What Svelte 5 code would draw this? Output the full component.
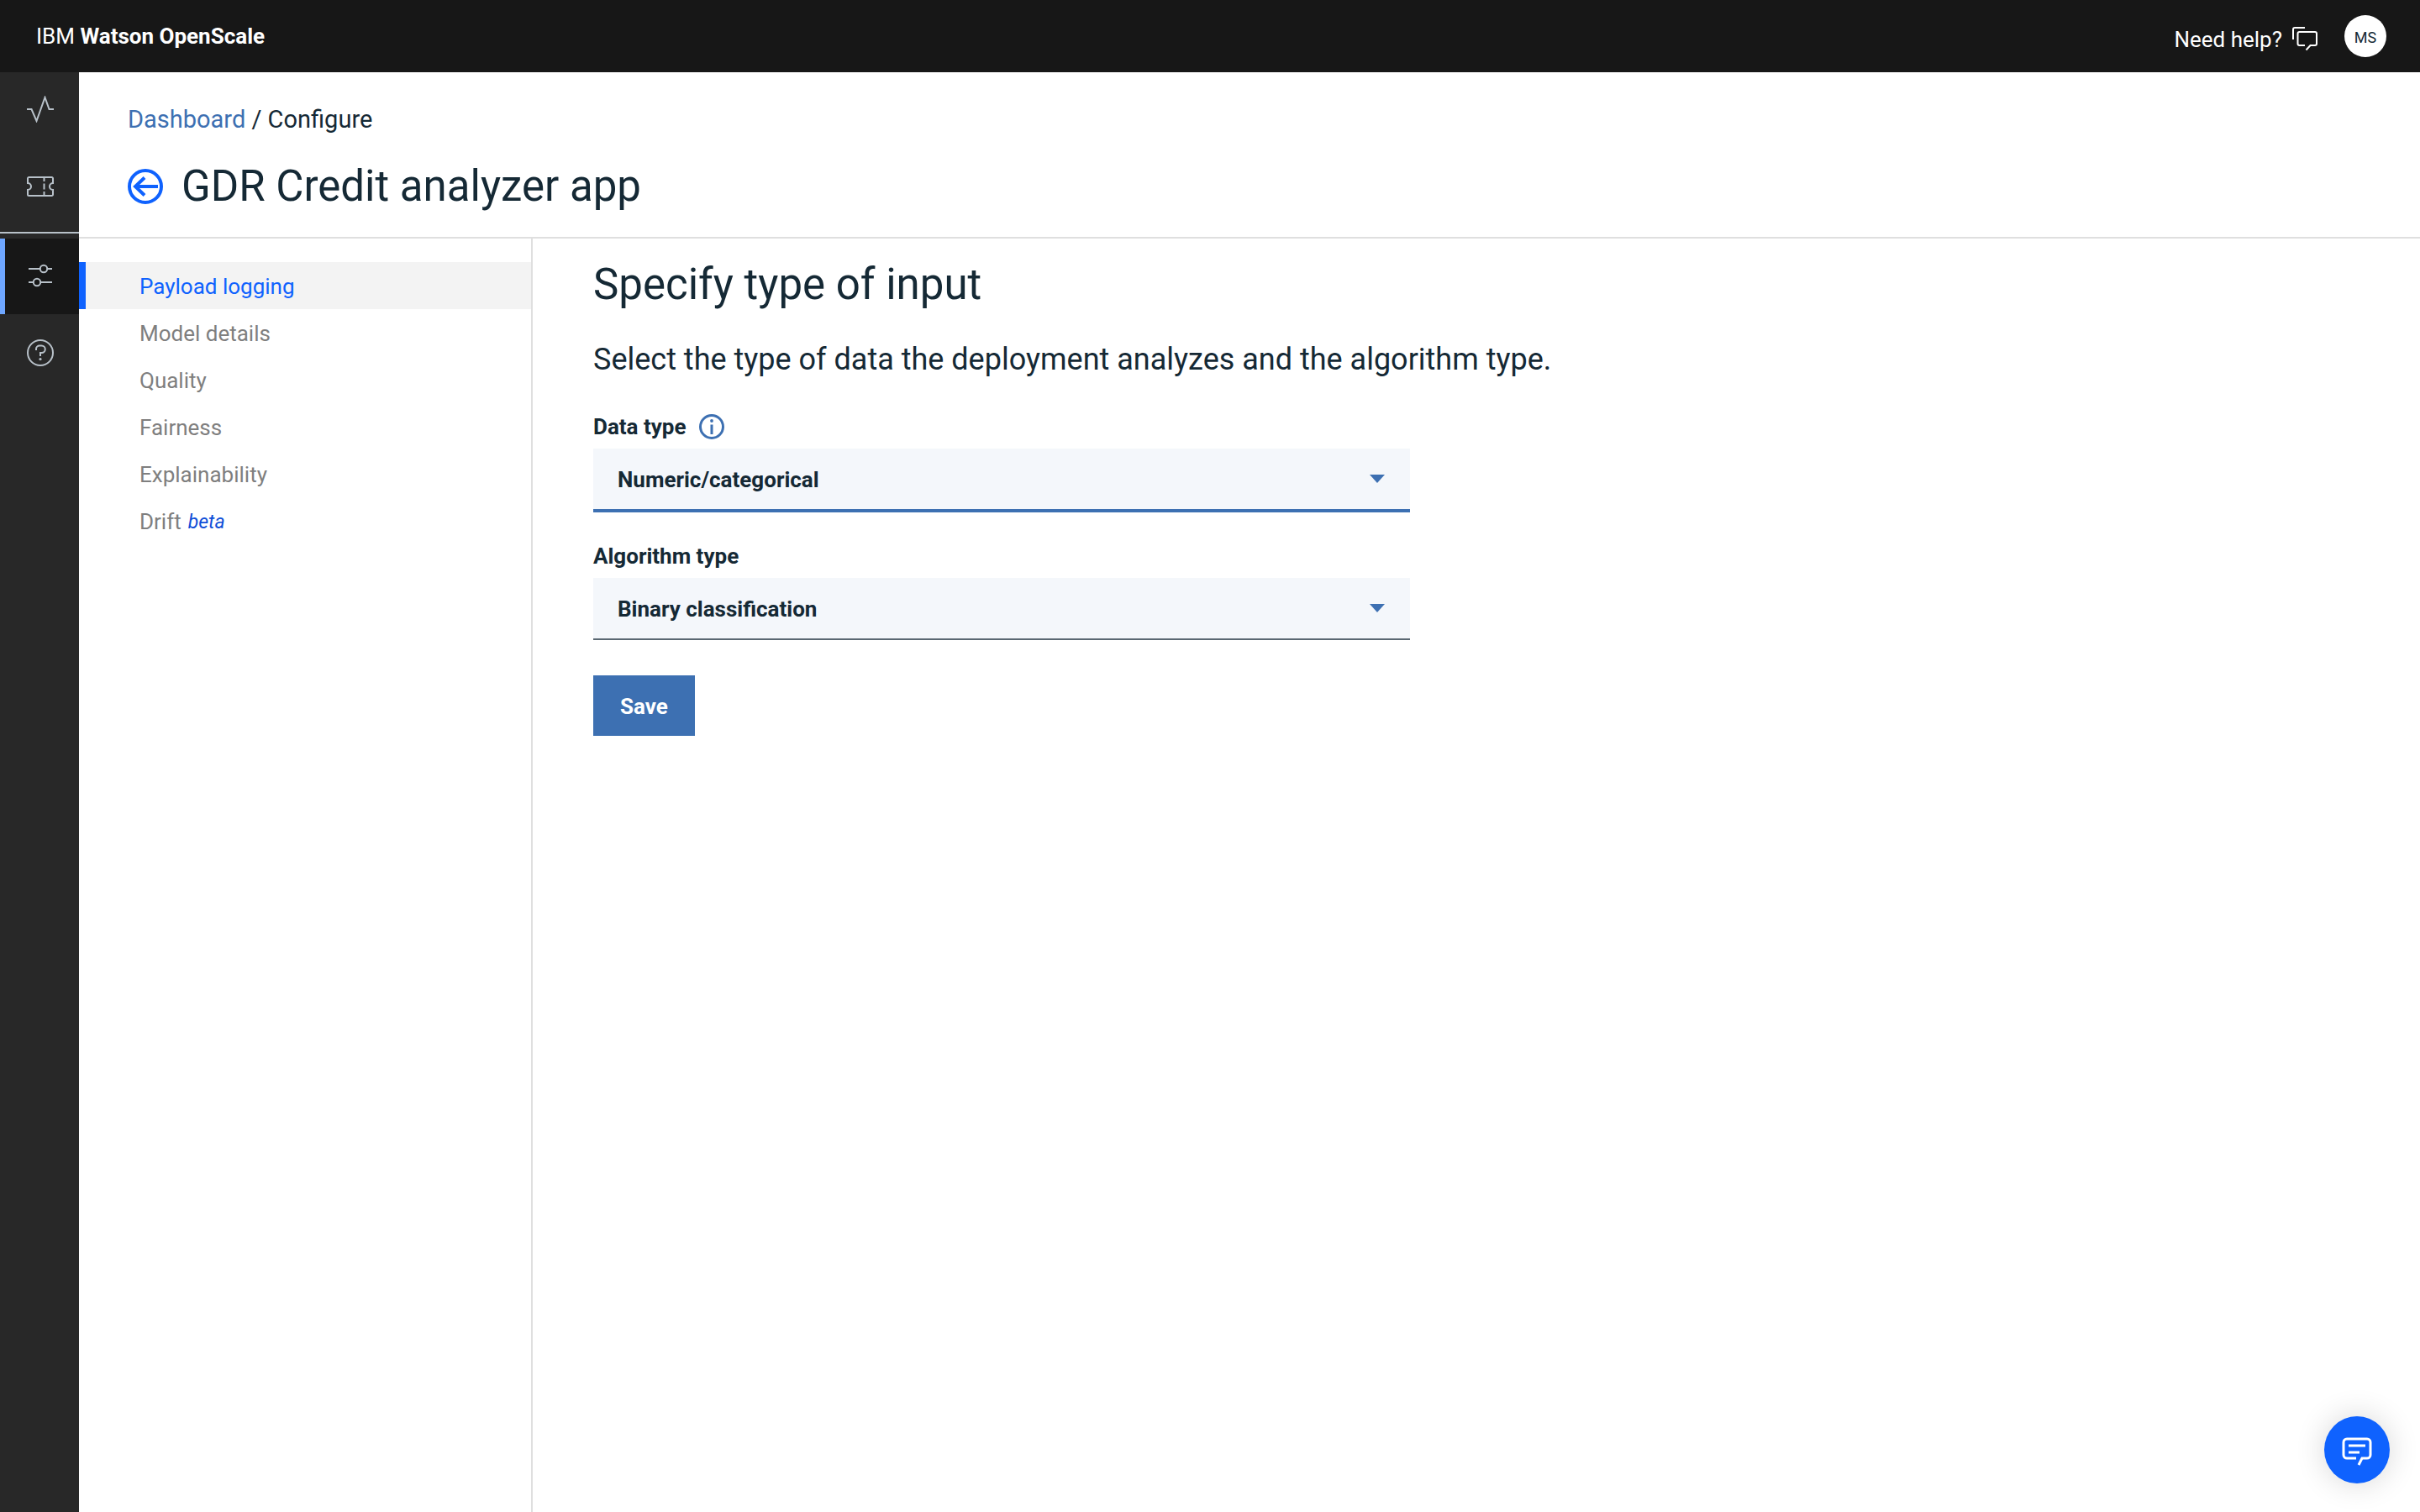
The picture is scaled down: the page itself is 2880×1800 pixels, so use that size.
<script>
  const sections = [
    { label: 'Payload logging', active: true },
    { label: 'Model details' },
    { label: 'Quality' },
    { label: 'Fairness' },
    { label: 'Explainability' },
    { label: 'Drift', tag: 'beta' }
  ];

  let dataType = $state('Numeric/categorical');
  let algorithmType = $state('Binary classification');
</script>

<div class="app">
  <header class="topbar">
    <div class="brand">IBM <strong>Watson OpenScale</strong></div>
    <div class="tools">
      <button class="help" type="button">
        <span>Need help?</span>
        <svg class="help-icon" viewBox="0 0 30 30" aria-hidden="true">
          <path d="M1 15V3a2 2 0 0 1 2-2h12" />
          <path d="M15 22H8.500a2 2 0 0 1-2-2V8a2 2 0 0 1 2-2H27a2 2 0 0 1 2 2v12a2 2 0 0 1-2 2h-5.500l-5 5.500" />
        </svg>
      </button>
      <button class="avatar" type="button">MS</button>
    </div>
  </header>

  <div class="body">
    <nav class="rail" aria-label="Main">
      <a class="rail-item" href="#insights" aria-label="Insights">
        <svg viewBox="0 0 32 32"><path d="M0 16h5.500l6 14L21.500 2l5 14H32" /></svg>
      </a>
      <a class="rail-item" href="#tickets" aria-label="Tickets">
        <svg viewBox="0 0 32 32">
          <path d="M2.500 5h27a1.500 1.500 0 0 1 1.500 1.500V12a4 4 0 0 0 0 8v5.500a1.500 1.500 0 0 1-1.500 1.500h-27A1.500 1.500 0 0 1 1 25.500V20a4 4 0 0 0 0-8V6.500A1.500 1.500 0 0 1 2.500 5z" />
          <path d="M20.500 5v5m0 2.500v7m0 2.500v5" />
        </svg>
      </a>
      <div class="divider"></div>
      <a class="rail-item current" href="#configure" aria-label="Configure">
        <svg viewBox="0 0 32 32">
          <path d="M2 8h13m10 0h5M2 24h5m10 0h13" />
          <circle cx="20" cy="8" r="4.200" /><circle cx="12" cy="24" r="4.200" />
        </svg>
      </a>
      <a class="rail-item" href="#support" aria-label="Support">
        <svg viewBox="0 0 32 32">
          <circle cx="16" cy="16" r="15" />
          <path d="M11 13v-1.500a4 4 0 0 1 4-4h2.500a3.800 3.800 0 0 1 0 8.500H16v4" />
          <circle class="dot" cx="16" cy="23.500" r="1.600" />
        </svg>
      </a>
    </nav>

    <div class="page">
      <div class="page-head">
        <div class="crumbs"><a href="#dashboard">Dashboard</a> / Configure</div>
        <div class="title-row">
          <a class="back" href="#back" aria-label="Back">
            <svg viewBox="0 0 42 42">
              <circle cx="21" cy="21" r="19" />
              <path d="M36 21H9M20 10.500L9 21l11 10.500" />
            </svg>
          </a>
          <h1>GDR Credit analyzer app</h1>
        </div>
      </div>

      <div class="columns">
        <nav class="steps" aria-label="Configuration">
          {#each sections as s}
            <a class="step" class:active={s.active} href="#section">
              {s.label}{#if s.tag}<em>{s.tag}</em>{/if}
            </a>
          {/each}
        </nav>

        <main class="content">
          <h2>Specify type of input</h2>
          <p class="intro">Select the type of data the deployment analyzes and the algorithm type.</p>

          <div class="field">
            <div class="label-row">
              <label for="data-type">Data type</label>
              <button class="info" type="button" aria-label="About data types">
                <svg viewBox="0 0 30 30">
                  <circle class="ring" cx="15" cy="15" r="13.500" />
                  <circle cx="15" cy="8" r="1.900" />
                  <rect x="13.500" y="12.500" width="3" height="11.500" />
                </svg>
              </button>
            </div>
            <div class="picker focused">
              <select id="data-type" bind:value={dataType}>
                <option>Numeric/categorical</option>
              </select>
              <svg class="caret" viewBox="0 0 18 10" aria-hidden="true"><path d="M0 0h18l-9 10z" /></svg>
            </div>
          </div>

          <div class="field">
            <div class="label-row"><label for="algorithm-type">Algorithm type</label></div>
            <div class="picker">
              <select id="algorithm-type" bind:value={algorithmType}>
                <option>Binary classification</option>
              </select>
              <svg class="caret" viewBox="0 0 18 10" aria-hidden="true"><path d="M0 0h18l-9 10z" /></svg>
            </div>
          </div>

          <button class="save" type="button">Save</button>
        </main>
      </div>
    </div>
  </div>

  <button class="chat" type="button" aria-label="Open chat">
    <svg viewBox="0 0 36 34">
      <path d="M17 25H6a4 4 0 0 1-4-4V6a4 4 0 0 1 4-4h24a4 4 0 0 1 4 4v15a4 4 0 0 1-4 4h-6l-4 8" />
      <path d="M8 10h20M8 18h13" />
    </svg>
  </button>
</div>

<style>
  :global(body) {
    margin: 0;
    background: #fff;
  }

  .app {
    display: flex;
    flex-direction: column;
    min-height: 100vh;
    color: #152935;
    font-family: Roboto, 'Liberation Sans', sans-serif;
    font-size: 26px;
    line-height: 32px;
  }

  .app * {
    box-sizing: border-box;
  }

  a {
    color: inherit;
    text-decoration: none;
  }

  button,
  select {
    margin: 0;
    padding: 0;
    border: 0;
    border-radius: 0;
    background: none;
    color: inherit;
    font: inherit;
    cursor: pointer;
  }

  svg {
    display: block;
    flex: none;
    fill: none;
    stroke: currentColor;
    stroke-width: 2;
  }

  .topbar {
    display: flex;
    align-items: center;
    justify-content: space-between;
    height: 86px;
    padding: 0 40px 0 43px;
    background: #171717;
    color: #fff;
  }

  .brand strong {
    font-weight: 700;
  }

  .tools {
    display: flex;
    align-items: center;
    gap: 32px;
  }

  .help {
    display: flex;
    align-items: center;
    gap: 12px;
    padding-top: 8px;
  }

  .help-icon {
    width: 30px;
    height: 30px;
  }

  .avatar {
    width: 50px;
    height: 50px;
    padding-top: 4px;
    border-radius: 50%;
    background: #fff;
    color: #152935;
    font-size: 18px;
  }

  .body {
    display: flex;
    flex: 1;
  }

  .rail {
    display: flex;
    flex: none;
    flex-direction: column;
    gap: 2px;
    width: 94px;
    background: #282828;
    color: #b8c1c9;
  }

  .rail-item {
    display: flex;
    align-items: center;
    justify-content: center;
    height: 90px;
    padding: 0 0 2px 2px;
  }

  .rail-item svg {
    width: 32px;
    height: 32px;
  }

  .rail-item.current {
    padding-right: 6px;
    border-left: 6px solid #6ea6ff;
    background: #171717;
  }

  .divider {
    height: 2px;
    margin: 6px 0 4px;
    background: #b8c1c9;
  }

  .dot {
    fill: currentColor;
    stroke: none;
  }

  .page {
    display: flex;
    flex: 1;
    flex-direction: column;
    min-width: 0;
  }

  .page-head {
    display: flex;
    flex-direction: column;
    gap: 30px;
    padding: 38px 58px 28px;
    border-bottom: 2px solid #dfdfdf;
  }

  .crumbs {
    font-size: 29px;
    line-height: 36px;
  }

  .crumbs a {
    color: #3d70b2;
  }

  .title-row {
    display: flex;
    align-items: center;
    gap: 22px;
  }

  .back {
    color: #0f62fe;
  }

  .back svg {
    width: 42px;
    height: 42px;
    stroke-width: 4;
  }

  h1,
  h2 {
    margin: 0;
    font-size: 51px;
    font-weight: 400;
    line-height: 64px;
  }

  .columns {
    display: flex;
    flex: 1;
  }

  .steps {
    display: flex;
    flex: none;
    flex-direction: column;
    width: 540px;
    padding-top: 28px;
    border-right: 2px solid #dfdfdf;
  }

  .step {
    display: flex;
    align-items: center;
    gap: 8px;
    height: 56px;
    padding: 2px 0 0 64px;
    border-left: 8px solid transparent;
    color: #7f7f7f;
  }

  .step.active {
    border-color: #0f62fe;
    background: #f3f3f3;
    color: #0f62fe;
  }

  .step em {
    padding-top: 2px;
    color: #0f4fd8;
    font-size: 23px;
  }

  .content {
    flex: 1;
    min-width: 0;
    padding: 23px 72px;
  }

  .intro {
    margin: 33px 0 40px;
    font-size: 36px;
    line-height: 48px;
  }

  .field {
    display: flex;
    flex-direction: column;
    gap: 10px;
    max-width: 972px;
    margin-bottom: 36px;
    font-weight: 700;
  }

  .label-row {
    display: flex;
    align-items: center;
    gap: 15px;
  }

  .info {
    color: #3d70b2;
  }

  .info svg {
    width: 30px;
    height: 30px;
    fill: currentColor;
    stroke: none;
  }

  .info .ring {
    fill: none;
    stroke: currentColor;
    stroke-width: 3;
  }

  .picker {
    display: grid;
    align-items: center;
    border-bottom: 2px solid #5a6872;
    background: #f4f7fb;
  }

  .picker.focused {
    border-bottom: 4px solid #3d70b2;
  }

  .picker select {
    grid-area: 1 / 1;
    width: 100%;
    height: 72px;
    padding: 2px 80px 0 29px;
    appearance: none;
    outline: none;
  }

  .caret {
    grid-area: 1 / 1;
    justify-self: end;
    width: 18px;
    height: 10px;
    margin-right: 30px;
    fill: #3d70b2;
    stroke: none;
    pointer-events: none;
  }

  .save {
    height: 72px;
    margin-top: 6px;
    padding: 2px 32px 0;
    background: #3d70b2;
    color: #fff;
    font-weight: 700;
  }

  .chat {
    position: fixed;
    right: 36px;
    bottom: 34px;
    display: flex;
    align-items: center;
    justify-content: center;
    width: 78px;
    height: 80px;
    border-radius: 50%;
    background: #0f62fe;
    box-shadow: 0 0 36px rgba(0, 0, 0, 0.16);
    color: #fff;
  }

  .chat svg {
    width: 36px;
    height: 34px;
    margin-top: 4px;
    stroke-width: 3;
  }
</style>
